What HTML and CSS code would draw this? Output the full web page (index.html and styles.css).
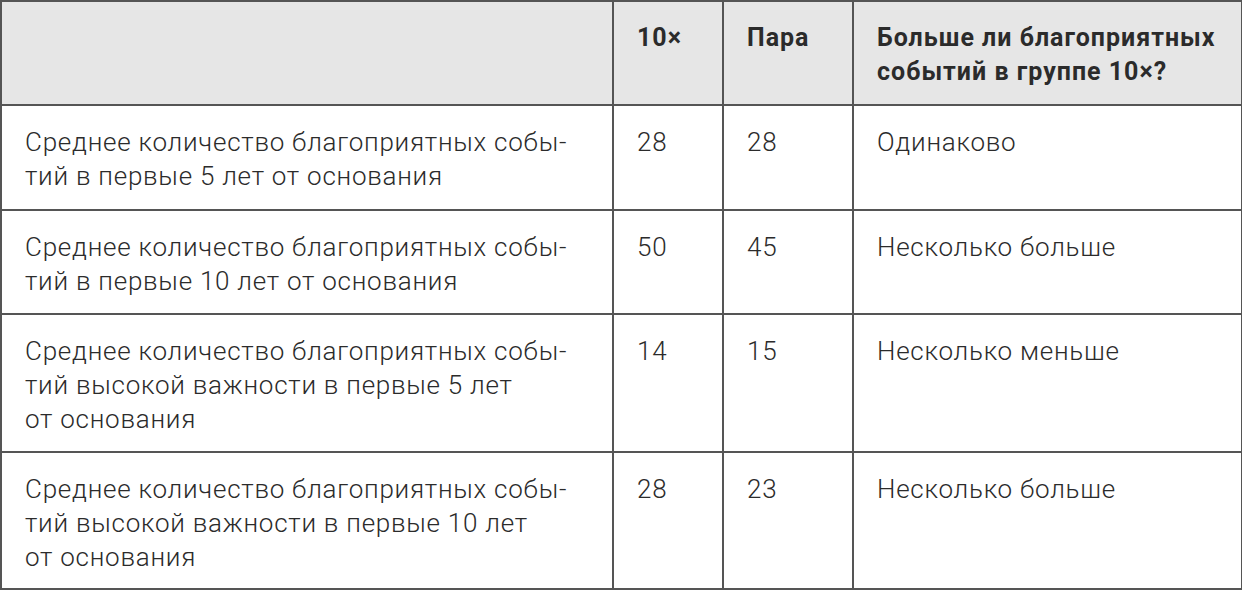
FILE: index.html
```html
<!DOCTYPE html>
<html lang="ru">
<head>
<meta charset="utf-8">
<link rel="stylesheet" href="styles.css">
</head>
<body>
<table class="tbl">
  <colgroup>
    <col class="c1"><col class="c2"><col class="c3"><col class="c4">
  </colgroup>
  <thead>
    <tr class="head">
      <th></th>
      <th>10×</th>
      <th>Пара</th>
      <th class="nowrap">Больше ли благоприятных<br>событий в группе 10×?</th>
    </tr>
  </thead>
  <tbody>
    <tr class="r2">
      <td>Среднее количество благоприятных собы-<br>тий в первые 5 лет от основания</td>
      <td>28</td><td>28</td><td>Одинаково</td>
    </tr>
    <tr class="r2b">
      <td>Среднее количество благоприятных собы-<br>тий в первые 10 лет от основания</td>
      <td>50</td><td>45</td><td>Несколько больше</td>
    </tr>
    <tr class="r3">
      <td>Среднее количество благоприятных собы-<br>тий высокой важности в первые 5 лет<br>от основания</td>
      <td>14</td><td>15</td><td>Несколько меньше</td>
    </tr>
    <tr class="r3b">
      <td>Среднее количество благоприятных собы-<br>тий высокой важности в первые 10 лет<br>от основания</td>
      <td>28</td><td>23</td><td>Несколько больше</td>
    </tr>
  </tbody>
</table>
</body>
</html>
```
FILE: styles.css
```css
html, body {
  margin: 0;
  padding: 0;
  background: #ffffff;
}
.tbl {
  border-collapse: collapse;
  table-layout: fixed;
  width: 1241px;
  font-family: Roboto, "Noto Sans", sans-serif;
  color: #2b2b2b;
  border: 2px solid #555555;
}
.c1 { width: 612px; }
.c2 { width: 110px; }
.c3 { width: 130px; }
.c4 { width: 389px; }
.tbl th, .tbl td {
  border: 2px solid #555555;
  text-align: left;
  vertical-align: top;
  font-size: 26px;
  line-height: 34px;
  letter-spacing: 0.75px;
  padding: 19px 10px 12px 23px;
}
.tbl td {
  font-weight: 300;
}
.tbl th {
  font-weight: 700;
  background: #e6e6e6;
  font-size: 25px;
  letter-spacing: 1px;
  padding-top: 19px;
  padding-bottom: 12px;
}
.nowrap { white-space: nowrap; }
.head { height: 104px; }
.r2 { height: 105px; }
.r2b { height: 104px; }
.r3 { height: 138px; }
.r3b { height: 137px; }
```
